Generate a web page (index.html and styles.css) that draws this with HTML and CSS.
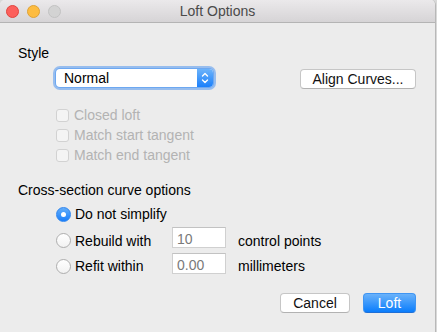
FILE: index.html
```html
<!DOCTYPE html>
<html lang="en">
<head>
  <meta charset="UTF-8" />
  <title>Loft Options</title>
  <link rel="stylesheet" href="styles.css">
</head>
<body>
  <div class="window">
    <div class="titlebar">
      <div class="lights">
        <span class="light close"></span>
        <span class="light minimize"></span>
        <span class="light zoom"></span>
      </div>
      <div class="title">Loft Options</div>
    </div>
    <div class="content">
      <div class="section-label">Style</div>
      <div class="style-row">
        <div class="popup">
          <span class="popup-value">Normal</span>
          <span class="stepper">
            <svg width="16" height="18" viewBox="0 0 16 18">
              <path d="M5.5 7 L8 4.5 L10.5 7" fill="none" stroke="#fff" stroke-width="1.4" stroke-linecap="round" stroke-linejoin="round"/>
              <path d="M5.5 11 L8 13.5 L10.5 11" fill="none" stroke="#fff" stroke-width="1.4" stroke-linecap="round" stroke-linejoin="round"/>
            </svg>
          </span>
        </div>
        <button class="button align-btn">Align Curves...</button>
      </div>
      <div class="checks">
        <label class="check"><span class="box"></span>Closed loft</label>
        <label class="check"><span class="box"></span>Match start tangent</label>
        <label class="check"><span class="box"></span>Match end tangent</label>
      </div>
      <div class="section-label cross">Cross-section curve options</div>
      <div class="radios">
        <label class="radio-label first"><span class="radio selected"></span>Do not simplify</label>
        <label class="radio-label"><span class="radio"></span>Rebuild with</label>
        <input class="field" type="text" value="10">
        <span class="unit">control points</span>
        <label class="radio-label last"><span class="radio"></span>Refit within</label>
        <input class="field" type="text" value="0.00">
        <span class="unit last">millimeters</span>
      </div>
      <div class="actions">
        <button class="button cancel-btn">Cancel</button>
        <button class="button primary">Loft</button>
      </div>
    </div>
  </div>
</body>
</html>
```

FILE: styles.css
```css
body {
  margin: 0;
  background-color: #d9d9d9;
  font-family: 'Liberation Sans', Arial, sans-serif;
  font-size: 14px;
  color: #000;
}
.window {
  width: 435px;
  height: 332px;
  background-color: #ececec;
  border-right: 1px solid #b8b8b8;
  border-top-right-radius: 5px;
  border-top-left-radius: 5px;
  overflow: hidden;
}
.titlebar {
  display: grid;
  grid-template-columns: 1fr auto 1fr;
  height: 22px;
  background: linear-gradient(#ebe9eb, #d6d4d6);
  border-bottom: 1px solid #b4b4b4;
}
.lights {
  display: flex;
  align-items: center;
  gap: 8px;
  padding-left: 6px;
}
.light {
  width: 11px;
  height: 11px;
  border-radius: 50%;
  border: 0.5px solid transparent;
}
.light.close {
  background-color: #fc605c;
  border-color: #e0443e;
}
.light.minimize {
  background-color: #fdbc40;
  border-color: #dea236;
}
.light.zoom {
  background-color: #d3d3d3;
  border-color: #c2c2c2;
}
.title {
  line-height: 22px;
  color: #4a4a4a;
}
.content {
  padding: 22px 19px 0 18px;
}
.section-label {
  line-height: 16px;
}
.section-label.cross {
  margin-top: 19px;
}
.style-row {
  display: flex;
  align-items: flex-start;
  margin-top: 8px;
}
.popup {
  display: flex;
  width: 157px;
  height: 18px;
  margin-left: 38px;
  background-color: #fff;
  border-radius: 4px;
  box-shadow: 0 0 0 3px rgba(82, 152, 240, 0.55), 0 0 0 1px #8fbcf2;
  overflow: hidden;
}
.popup-value {
  flex: 1;
  padding-left: 8px;
  line-height: 18px;
}
.stepper {
  width: 16px;
  height: 18px;
  background: linear-gradient(#6cb3fa, #1b80fb);
}
.stepper svg {
  display: block;
}
.button {
  height: 20px;
  padding: 0;
  font-family: 'Liberation Sans', Arial, sans-serif;
  font-size: 14px;
  color: #111;
  background-color: #fff;
  border: 1px solid #c6c6c6;
  border-bottom-color: #b2b2b2;
  border-radius: 4px;
  line-height: 18px;
}
.align-btn {
  width: 116px;
  margin-left: auto;
}
.checks {
  display: flex;
  flex-direction: column;
  gap: 4px;
  margin: 18px 0 0 38px;
}
.check {
  display: flex;
  align-items: center;
  gap: 5px;
  height: 16px;
  color: #b3b3b3;
}
.box {
  width: 11px;
  height: 11px;
  border: 1px solid #d2d2d2;
  border-radius: 3px;
  background-color: #f4f4f4;
}
.radios {
  display: grid;
  grid-template-columns: 116px 54px auto;
  grid-template-rows: 16px 21px 21px;
  row-gap: 5px;
  align-items: center;
  margin: 8px 0 0 38px;
}
.radio-label {
  display: flex;
  align-items: center;
  gap: 4px;
  line-height: 16px;
  margin-top: 6px;
}
.radio-label.first {
  grid-column: 1 / 4;
  margin-top: 0;
}
.radio-label.last {
  margin-top: 5px;
}
.radio {
  width: 13px;
  height: 13px;
  border: 1px solid #aeaeae;
  border-radius: 50%;
  background: linear-gradient(#ffffff, #f2f2f2);
}
.radio.selected {
  display: flex;
  align-items: center;
  justify-content: center;
  border-color: #2f86f0;
  background: linear-gradient(#63adf9, #1a7ffb);
}
.radio.selected::after {
  content: "";
  width: 5px;
  height: 5px;
  border-radius: 50%;
  background-color: #fff;
}
.field {
  box-sizing: border-box;
  width: 54px;
  height: 21px;
  padding: 3px 0 0 4px;
  font-family: 'Liberation Sans', Arial, sans-serif;
  font-size: 14px;
  color: #7a7a7a;
  background-color: #fff;
  border: 1px solid #d0d0d0;
  border-top-color: #c2c2c2;
  outline: none;
}
.unit {
  margin: 6px 0 0 12px;
  line-height: 16px;
}
.unit.last {
  margin-top: 5px;
}
.actions {
  display: flex;
  justify-content: flex-end;
  gap: 13px;
  margin-top: 19px;
}
.cancel-btn {
  width: 70px;
}
.primary {
  width: 53px;
  color: #fff;
  background: linear-gradient(#6ab2fa, #0a7dfc);
  border-color: #3f95f3;
  border-bottom-color: #1f6fd6;
}
```
